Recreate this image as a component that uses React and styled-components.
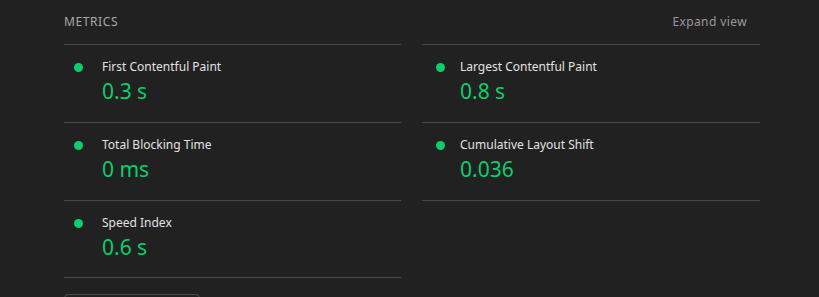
import React from 'react'
import styled, { createGlobalStyle } from 'styled-components'

const GlobalStyle = createGlobalStyle`
  html, body {
    margin: 0;
    background: #212121;
    font-family: "Noto Sans", "Open Sans", sans-serif;
    overflow: hidden;
  }
`

const Page = styled.div`
  padding-left: 64px;
  width: 696px;
`

const Header = styled.div`
  height: 44px;
  display: flex;
  align-items: center;
  justify-content: space-between;
  padding-right: 13px;
  box-sizing: border-box;
`

const Title = styled.span`
  font-size: 12px;
  letter-spacing: 0.6px;
  color: #a8a8a8;
  text-transform: uppercase;
  margin-top: -2px;
`

const Toggle = styled.span`
  font-size: 12px;
  letter-spacing: 0.4px;
  color: #9a9a9a;
  margin-top: -2px;
`

const Grid = styled.div`
  display: grid;
  grid-template-columns: 337px 338px;
  column-gap: 21px;
  align-items: start;
`

const Metric = styled.div`
  display: grid;
  grid-template-columns: 38px 1fr;
  height: ${p => (p.last ? '76px' : '77px')};
  border-bottom: 1px solid #474747;
  &:nth-child(-n + 2) {
    border-top: 1px solid #474747;
  }
`

const Dot = styled.span`
  width: 9px;
  height: 9px;
  border-radius: 50%;
  background: #0cce6b;
  margin: 18px 0 0 ${p => (p.right ? '14px' : '10px')};
`

const Body = styled.div`
  padding-top: 13px;
`

const Label = styled.div`
  font-size: 12px;
  line-height: 17px;
  color: #e2e2e2;
`

const Value = styled.div`
  font-size: 21px;
  line-height: 28px;
  color: #0cce6b;
  margin-top: 2px;
`

const Button = styled.button`
  display: block;
  margin-top: 16px;
  width: 136px;
  height: 32px;
  border: 1px solid #4e4e4e;
  border-radius: 4px;
  background: transparent;
`

const metrics = [
  { label: 'First Contentful Paint', value: '0.3 s' },
  { label: 'Largest Contentful Paint', value: '0.8 s', right: true },
  { label: 'Total Blocking Time', value: '0 ms' },
  { label: 'Cumulative Layout Shift', value: '0.036', right: true },
  { label: 'Speed Index', value: '0.6 s', last: true },
]

export default function App() {
  return (
    <Page>
      <GlobalStyle />
      <Header>
        <Title>Metrics</Title>
        <Toggle>Expand view</Toggle>
      </Header>
      <Grid>
        {metrics.map(m => (
          <Metric key={m.label} last={m.last}>
            <Dot right={m.right} />
            <Body>
              <Label>{m.label}</Label>
              <Value>{m.value}</Value>
            </Body>
          </Metric>
        ))}
      </Grid>
      <Button aria-label="View Treemap" />
    </Page>
  )
}
